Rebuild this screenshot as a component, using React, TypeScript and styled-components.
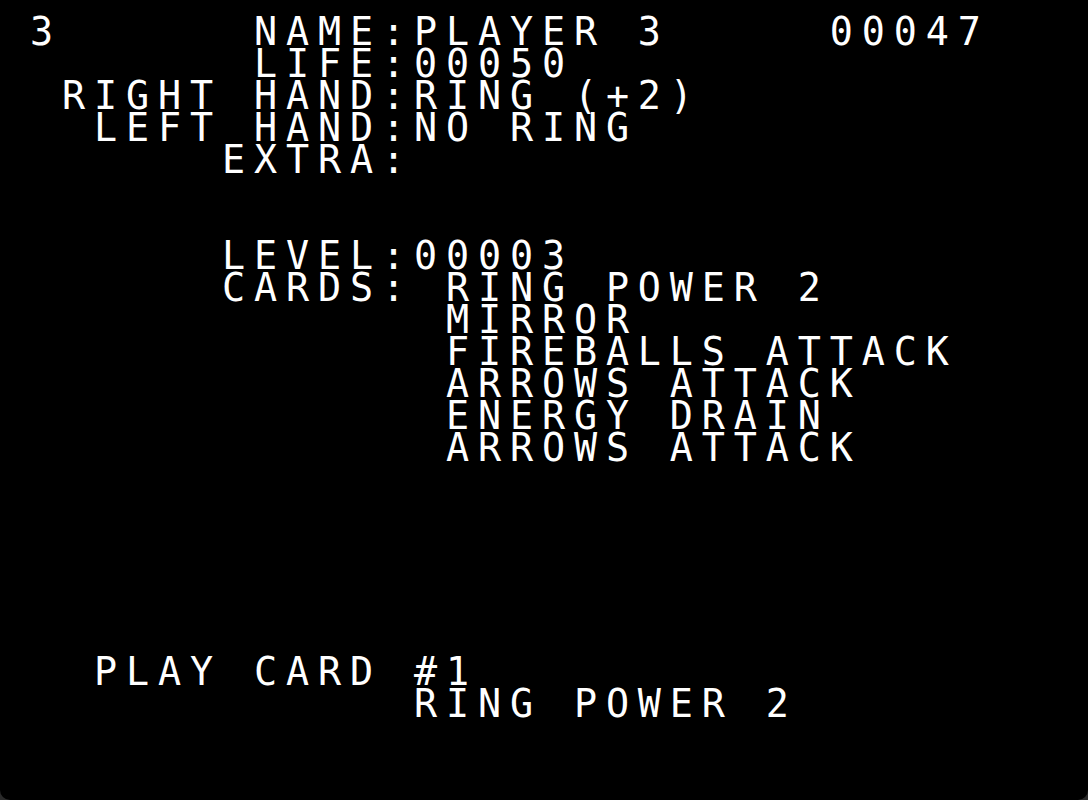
import React from "react";
import styled, { createGlobalStyle } from "styled-components";

const Global = createGlobalStyle`
  html, body { margin: 0; padding: 0; background: #2a2a2a; }
  #root { width: 1088px; height: 800px; }
`;

const Screen = styled.div`
  width: 1088px;
  height: 800px;
  box-sizing: border-box;
  background: #000;
  border-radius: 0 0 10px 10px;
  padding: 16px 0 0 30px;
  overflow: hidden;
  display: flex;
  flex-direction: column;
`;

const Line = styled.div`
  height: 32px;
  font-family: "DejaVu Sans Mono", "Liberation Mono", monospace;
  font-size: 38.4px;
  line-height: 32px;
  letter-spacing: 8.88px;
  color: #fff;
  white-space: pre;
`;

const lines: string[] = [
  "3      NAME:PLAYER 3     00047",
  "       LIFE:00050",
  " RIGHT HAND:RING (+2)",
  "  LEFT HAND:NO RING",
  "      EXTRA:",
  "",
  "",
  "      LEVEL:00003",
  "      CARDS: RING POWER 2",
  "             MIRROR",
  "             FIREBALLS ATTACK",
  "             ARROWS ATTACK",
  "             ENERGY DRAIN",
  "             ARROWS ATTACK",
  "",
  "",
  "",
  "",
  "",
  "",
  "  PLAY CARD #1",
  "            RING POWER 2",
];

export default function App() {
  return (
    <>
      <Global />
      <Screen>
        {lines.map((l, i) => (
          <Line key={i}>{l}</Line>
        ))}
      </Screen>
    </>
  );
}
